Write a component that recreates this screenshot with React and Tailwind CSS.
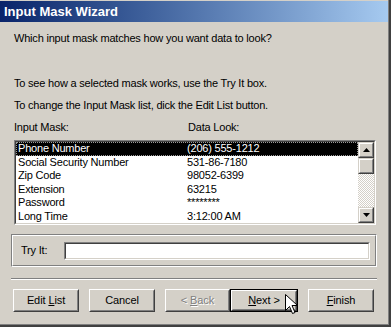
import React from "react";

const font = { fontFamily: '"Liberation Sans", Arial, sans-serif' };

function Btn({ children, isDefault, className = "" }) {
  const inner = (
    <div className="h-full w-full border border-t-white border-l-white border-r-[#404040] border-b-[#404040]">
      <div className="h-full w-full border border-t-[#d4d0c8] border-l-[#d4d0c8] border-r-[#808080] border-b-[#808080] flex items-center justify-center text-[11px] tracking-[-0.1px] text-black">
        <span>{children}</span>
      </div>
    </div>
  );
  if (isDefault) {
    return <div className={"h-[23px] border border-black " + className}>{inner}</div>;
  }
  return <div className={"h-[23px] " + className}>{inner}</div>;
}

function ScrollBtn({ up }) {
  return (
    <div className="w-[16px] h-[16px] border border-t-[#d4d0c8] border-l-[#d4d0c8] border-r-[#404040] border-b-[#404040] bg-[#d4d0c8]">
      <div className="w-full h-full border border-t-white border-l-white border-r-[#808080] border-b-[#808080] flex items-center justify-center">
        <svg width="7" height="4" viewBox="0 0 7 4">
          {up ? <polygon points="3.5,0 7,4 0,4" fill="black" /> : <polygon points="0,0 7,0 3.5,4" fill="black" />}
        </svg>
      </div>
    </div>
  );
}

const rows = [
  ["Phone Number", "(206) 555-1212"],
  ["Social Security Number", "531-86-7180"],
  ["Zip Code", "98052-6399"],
  ["Extension", "63215"],
  ["Password", "********"],
  ["Long Time", "3:12:00 AM"],
];

export default function App() {
  return (
    <div style={font} className="w-[391px] h-[327px] bg-[#d4d0c8] border-r-2 border-b-2 border-[#404040] relative overflow-hidden">
      <div className="w-full h-full border-r border-b border-[#808080] flex flex-col">
        <div className="h-[21px] mt-[1px] bg-gradient-to-r from-[#0a246a] to-[#a6caf0] flex items-center pl-[4px]">
          <span className="text-white font-bold text-[13px] leading-none">Input Mask Wizard</span>
        </div>
        <div className="px-[11px] flex flex-col text-[11px] tracking-[-0.2px]">
          <div className="pl-[3px] leading-[13px] text-black mt-[10px]">Which input mask matches how you want data to look?</div>
          <div className="pl-[3px] leading-[13px] text-black mt-[32px]">To see how a selected mask works, use the Try It box.</div>
          <div className="pl-[3px] leading-[13px] text-black mt-[9px]">To change the Input Mask list, dick the Edit List button.</div>
          <div className="pl-[3px] flex leading-[13px] text-black mt-[9px]">
            <span className="w-[174px]">Input Mask:</span>
            <span>Data Look:</span>
          </div>
          <div className="ml-[3px] mr-[1px] mt-[6px] h-[85px] border border-t-[#808080] border-l-[#808080] border-r-white border-b-white">
            <div className="h-full border border-t-[#404040] border-l-[#404040] border-r-[#d4d0c8] border-b-[#d4d0c8] bg-white flex">
              <div className="flex-1 overflow-hidden">
                {rows.map((r, i) => (
                  <div
                    key={i}
                    className={
                      "h-[13.5px] flex items-center leading-none " +
                      (i === 0 ? "bg-black text-white outline outline-1 outline-dotted outline-[#9a9a9a] -outline-offset-1" : "text-black")
                    }
                  >
                    <span className="w-[171px] pl-[2px]">{r[0]}</span>
                    <span>{r[1]}</span>
                  </div>
                ))}
              </div>
              <div className="w-[16px] flex flex-col bg-[repeating-conic-gradient(#ffffff_0%_25%,#d4d0c8_0%_50%)] bg-[length:2px_2px]">
                <ScrollBtn up />
                <div className="w-[16px] h-[16px] border border-t-[#d4d0c8] border-l-[#d4d0c8] border-r-[#404040] border-b-[#404040] bg-[#d4d0c8]">
                  <div className="w-full h-full border border-t-white border-l-white border-r-[#808080] border-b-[#808080]" />
                </div>
                <div className="flex-1" />
                <ScrollBtn />
              </div>
            </div>
          </div>

          <div className="mt-[9px] h-[33px] border border-t-[#808080] border-l-[#808080] border-r-white border-b-white">
            <div className="h-full border border-t-white border-l-white border-r-[#808080] border-b-[#808080] flex items-center pl-[8px] pr-[5px]">
              <span className="text-black w-[43px]">Try It:</span>
              <div className="flex-1 h-[18px] border border-t-[#808080] border-l-[#808080] border-r-white border-b-white">
                <div className="h-full border border-t-[#404040] border-l-[#404040] border-r-[#d4d0c8] border-b-[#d4d0c8] bg-white" />
              </div>
            </div>
          </div>

          <div className="mt-[11px] h-[2px] border-t border-t-[#808080] border-b border-b-white" />

          <div className="mt-[9px] flex items-center">
            <Btn className="ml-[2px] w-[66px]">{"Edit "}<u>L</u>ist</Btn>
            <Btn className="ml-[10px] w-[66px]">Cancel</Btn>
            <Btn className="ml-[10px] w-[65px]">
              <span className="text-[#808080] [text-shadow:1px_1px_0_#ffffff]">{"< "}<u>B</u>ack</span>
            </Btn>
            <Btn isDefault className="w-[68px]"><u>N</u>{"ext >"}</Btn>
            <Btn className="ml-[10px] w-[66px]"><u>F</u>inish</Btn>
          </div>
        </div>
      </div>
      <svg className="absolute left-[285px] top-[294px]" width="13" height="21" viewBox="0 0 13 21">
        <polygon points="0.5,0.5 0.5,16.5 4.5,12.5 7.5,19.5 10,18.5 7,11.5 12.5,11.5" fill="white" stroke="black" strokeWidth="1" />
      </svg>
    </div>
  );
}
